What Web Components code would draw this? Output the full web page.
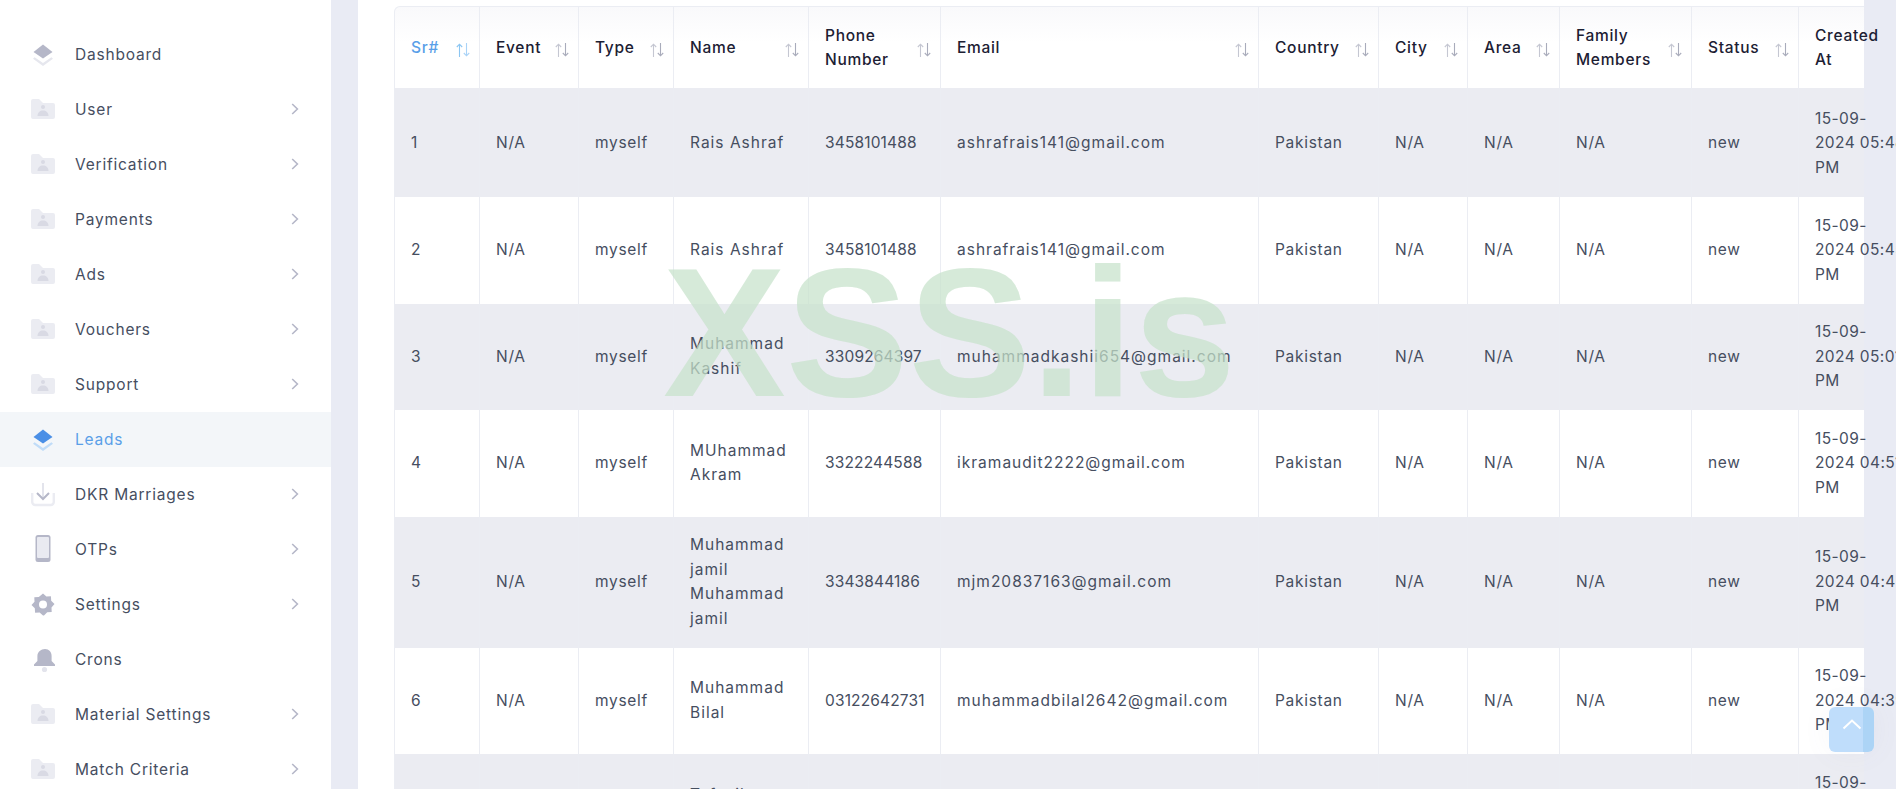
<!DOCTYPE html>
<html>
<head>
<meta charset="utf-8">
<title>Leads</title>
<style>
html, body { margin: 0; height: 100%; overflow: hidden; background: #e9ebf4; }
body { font-family: Inter, "Noto Sans", sans-serif; }
</style>
</head>
<body>
<admin-shell>
  <side-nav slot="side">
    <nav-item icon="layers" label="Dashboard" plain></nav-item>
    <nav-item icon="folder" label="User"></nav-item>
    <nav-item icon="folder" label="Verification"></nav-item>
    <nav-item icon="folder" label="Payments"></nav-item>
    <nav-item icon="folder" label="Ads"></nav-item>
    <nav-item icon="folder" label="Vouchers"></nav-item>
    <nav-item icon="folder" label="Support"></nav-item>
    <nav-item icon="layers" label="Leads" plain active></nav-item>
    <nav-item icon="download" label="DKR Marriages"></nav-item>
    <nav-item icon="phone" label="OTPs"></nav-item>
    <nav-item icon="gear" label="Settings"></nav-item>
    <nav-item icon="bell" label="Crons" plain></nav-item>
    <nav-item icon="folder" label="Material Settings"></nav-item>
    <nav-item icon="folder" label="Match Criteria"></nav-item>
  </side-nav>
  <leads-table></leads-table>
</admin-shell>
<water-mark>XSS.is</water-mark>
<scroll-top></scroll-top>

<script>
const ICONS = {
    layers: `<path d="M12 1.5 21.5 9 12 15.5 2.5 9Z" fill="var(--a)"/><path d="M3.6 14.2 12 20l8.4-5.8 1.6 1.6L12 23 2 15.8Z" fill="var(--b)"/>`,
    folder: `<path d="M0 2a2 2 0 0 1 2-2h6l4 4h10a2 2 0 0 1 2 2v12a2 2 0 0 1-2 2H2a2 2 0 0 1-2-2Z" fill="#ebecf2" transform="translate(0 1)"/>
        <circle cx="12" cy="9" r="2" fill="#d9dae4"/><path d="M6.5 18c0-3.5 2.5-5.5 5.5-5.5s5.5 2 5.5 5.5Z" fill="#d9dae4"/>`,
    download: `<path d="M1.2 10v9a3 3 0 0 0 3 3h15.6a3 3 0 0 0 3-3v-9" fill="none" stroke="#ebecf2" stroke-width="2.4"/>
        <path d="M12 0v15" stroke="#e3e4ec" stroke-width="2"/><path d="M6 10l6 6 6-6" fill="none" stroke="#b5b7c8" stroke-width="2"/>`,
    phone: `<rect x="4.5" y="0" width="15" height="27" rx="2.5" fill="#b5b7c8"/><rect x="6" y="2" width="12" height="21" rx="1" fill="#e9eaf1"/>`,
    gear: `<path d="M12 .5l3.4 3 4.5-.2.3 4.5 3.3 3.2-3 3.4.2 4.5-4.5.3L13 22.5l-1 .1-3.4-3-4.5.2-.3-4.5-3.3-3.2 3-3.4-.2-4.5 4.5-.3Z" fill="#b5b7c8"/><circle cx="12" cy="11.5" r="4" fill="#fff"/>`,
    bell: `<path d="M14 1c4 0 6.6 3 6.6 7v5l3.4 3.4v1.6H3v-1.6L6.4 13V8C6.4 4 10 1 14 1Z" fill="#b5b7c8"/><circle cx="13.5" cy="21.5" r="2.6" fill="#e3e4ec"/>`
};

class AdminShell extends HTMLElement {
    constructor() {
        super();
        this.attachShadow({ mode: 'open' }).innerHTML = `
        <style>
        :host { display: flex; width: 1896px; height: 789px; overflow: hidden; background: #e9ebf4; }
        .side { flex: 0 0 331px; background: #fff; overflow: hidden; }
        .main { flex: 0 0 1505px; margin-left: 27px; background: #fff; padding: 6px 0 0 36px; box-sizing: border-box; }
        </style>
        <div class="side"><slot name="side"></slot></div>
        <div class="main"><slot></slot></div>
        `;
    }
}

class SideNav extends HTMLElement {
    constructor() {
        super();
        this.attachShadow({ mode: 'open' }).innerHTML = `
        <style>
        :host { display: flex; flex-direction: column; padding-top: 26.5px; }
        </style>
        <slot></slot>
        `;
    }
}

class NavItem extends HTMLElement {
    constructor() {
        super();
        this.shadow = this.attachShadow({ mode: 'open' });
    }

    connectedCallback() {
        const icon = this.getAttribute('icon');
        const chevron = this.hasAttribute('plain') ? '' : `
            <svg class="chev" width="8" height="12" viewBox="0 0 8 12"><path d="M1.2 1 6.4 6l-5.2 5" fill="none" stroke="#b5b7c8" stroke-width="1.6"/></svg>`;
        this.shadow.innerHTML = `
        <style>
        :host { display: flex; align-items: center; height: 55px; padding: 0 32px 0 31px; color: #464e5f;
            font: 400 15.5px Inter, "Noto Sans", sans-serif; letter-spacing: .8px; --a: #b5b7c8; --b: #e6e7ee; }
        :host([active]) { background: #f3f6f9; color: #5a9fe8; --a: #4a8fe6; --b: #c0dcf8; }
        .ic { flex: 0 0 24px; height: 28px; margin-right: 20px; }
        span { flex: 1; }
        </style>
        <svg class="ic" viewBox="0 0 24 28"><g transform="translate(0 ${icon === 'phone' ? 0 : 3})">${ICONS[icon]}</g></svg>
        <span>${this.getAttribute('label')}</span>${chevron}
        `;
    }
}

// last column stops at the card edge, its text runs on past it like in the app
const COLS = [86, 99, 95, 135, 132, 318, 120, 89, 92, 132, 107, 65];
const HEAD = ['Sr#', 'Event', 'Type', 'Name', 'Phone Number', 'Email', 'Country', 'City', 'Area', 'Family Members', 'Status', 'Created<br>At'];
const LEADS = [
    ['Rais Ashraf', '3458101488', 'ashrafrais141@gmail.com', '05:48'],
    ['Rais Ashraf', '3458101488', 'ashrafrais141@gmail.com', '05:45'],
    ['Muhammad Kashif', '3309264397', 'muhammadkashii654@gmail.com', '05:01'],
    ['MUhammad Akram', '3322244588', 'ikramaudit2222@gmail.com', '04:51'],
    ['Muhammad jamil Muhammad jamil', '3343844186', 'mjm20837163@gmail.com', '04:45'],
    ['Muhammad Bilal', '03122642731', 'muhammadbilal2642@gmail.com', '04:39'],
    ['Tafazil Hussain', '3001234567', 'tafazilhussain@gmail.com', '04:30']
];

class LeadsTable extends HTMLElement {
    constructor() {
        super();
        this.shadow = this.attachShadow({ mode: 'open' });
    }

    connectedCallback() {
        const arrows = `<svg class="sort" width="15" height="14" viewBox="0 0 15 14">
            <path class="up" d="M3.5 14V1.5M.8 4 3.5 1.2 6.2 4" fill="none" stroke-width="1.1"/>
            <path class="dn" d="M10.5 0v12.5M7.8 10l2.7 2.8L13.2 10" fill="none" stroke-width="1.1"/></svg>`;
        const head = HEAD.map((h, i) => `<th class="${i === 0 ? 'on' : ''} ${i === 11 ? 'last' : ''}"><div class="th"><span>${h}</span>${i === 11 ? '' : arrows}</div></th>`).join('');
        const rows = LEADS.map((l, i) => `<tr>
            <td>${i + 1}</td><td>N/A</td><td>myself</td><td class="wide">${l[0]}</td><td class="num">${l[1]}</td><td class="wide">${l[2]}</td>
            <td>Pakistan</td><td>N/A</td><td>N/A</td><td>N/A</td><td>new</td>
            <td class="date">15-09-<br>2024 ${l[3]}<br>PM</td></tr>`).join('');
        this.shadow.innerHTML = `
        <style>
        :host { display: block; font: 400 15.5px/24.5px Inter, "Noto Sans", sans-serif; letter-spacing: .7px; color: #464e5f; }
        table { border-collapse: separate; border-spacing: 0; table-layout: fixed; width: ${COLS.reduce((a, b) => a + b)}px; }
        thead tr { height: 82px; background: linear-gradient(#f9f9fb, #fff 45%); }
        th { font-weight: 500; text-align: left; color: #1c2033; padding: 1px 8px 0 16px; border-top: 1px solid #ebedf3; border-right: 1px solid #ebedf3; }
        th:first-child { border-left: 1px solid #ebedf3; border-top-left-radius: 6px; }
        th.on { color: #5a9fe8; }
        th.last { border-right: 0; padding-right: 0; white-space: nowrap; }
        .th { display: flex; align-items: center; justify-content: space-between; }
        .sort { flex: none; margin-top: 3px; }
        .up { stroke: #c5c7d2; } .dn { stroke: #a9acbb; }
        .on .up { stroke: #8cc6f2; } .on .dn { stroke: #a9d3f7; }
        td { padding: 16.5px 17px 16.5px 16px; height: 73.5px; box-sizing: content-box; border-right: 1px solid #ebedf3; vertical-align: middle; }
        td:first-child { border-left: 1px solid #ebedf3; }
        td.wide { letter-spacing: 1px; }
        td.num { letter-spacing: .15px; }
        td.date { letter-spacing: .4px; white-space: nowrap; border-right: 0; padding-right: 0; }
        tbody tr:nth-child(odd) td { background: #ebecf2; }
        tbody tr:first-child td { padding-top: 18.75px; padding-bottom: 16.75px; }
        </style>
        <table>
            <colgroup>${COLS.map(c => `<col style="width:${c}px">`).join('')}</colgroup>
            <thead><tr>${head}</tr></thead>
            <tbody>${rows}</tbody>
        </table>
        `;
    }
}

class WaterMark extends HTMLElement {
    constructor() {
        super();
        this.attachShadow({ mode: 'open' }).innerHTML = `
        <style>
        :host { position: absolute; left: 663px; top: 232px; font: 700 184px/200px "Liberation Sans", Arial, sans-serif;
            color: rgba(198, 226, 202, .72); pointer-events: none; white-space: nowrap; }
        </style>
        <slot></slot>
        `;
    }
}

class ScrollTop extends HTMLElement {
    constructor() {
        super();
        this.attachShadow({ mode: 'open' }).innerHTML = `
        <style>
        :host { position: fixed; right: 22px; bottom: 37px; width: 45px; height: 45px; border-radius: 6px;
            background: linear-gradient(90deg, #bfddfb 34px, #acd4f6 34px); box-shadow: 0 0 30px rgba(120, 120, 150, .06);
            display: flex; align-items: center; justify-content: center; }
        </style>
        <svg width="20" height="28" viewBox="0 0 20 28">
            <defs><linearGradient id="tail" x1="0" y1="0" x2="0" y2="1"><stop offset="0" stop-color="#fff"/><stop offset="1" stop-color="#fff" stop-opacity=".15"/></linearGradient></defs>
            <path d="M10 8v18" stroke="url(#tail)" stroke-width="2" fill="none"/>
            <path d="M1.5 12.5 10 4.5l8.5 8" stroke="#fff" stroke-width="2" fill="none"/>
        </svg>
        `;
    }
}

customElements.define('admin-shell', AdminShell);
customElements.define('side-nav', SideNav);
customElements.define('nav-item', NavItem);
customElements.define('leads-table', LeadsTable);
customElements.define('water-mark', WaterMark);
customElements.define('scroll-top', ScrollTop);
</script>
</body>
</html>
